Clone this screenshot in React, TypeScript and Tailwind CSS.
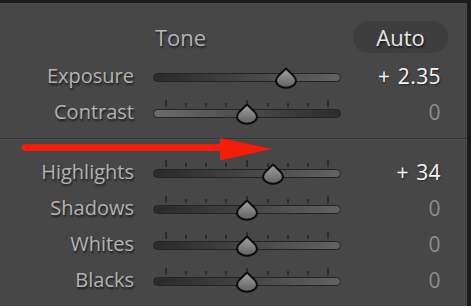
import React from "react";

const TICKS = [13, 33, 53, 73, 94, 115, 135, 155, 175];
const TALL = new Set([13, 94, 175]);

function Thumb({ x }: { x: number }) {
  return (
    <svg
      width="22"
      height="22"
      viewBox="0 0 22 22"
      className="absolute top-[9px]"
      style={{ left: x - 11 }}
    >
      <defs>
        <linearGradient id="thumbg" x1="0" y1="0" x2="0" y2="1">
          <stop offset="0" stopColor="#a4a4a4" />
          <stop offset="1" stopColor="#5f5f5f" />
        </linearGradient>
      </defs>
      <path
        d="M11 1.5 L18 8.3 Q21 11 21 13.5 A10 7.3 0 0 1 1 13.5 Q1 11 4 8.3 Z"
        fill="url(#thumbg)"
        stroke="#0c0c0c"
        strokeWidth="2"
        strokeLinejoin="round"
      />
    </svg>
  );
}

function Row({
  label,
  value,
  pos,
  ticks = true,
  reverse = false,
  bright = false,
}: {
  label: string;
  value: string;
  pos: number;
  ticks?: boolean;
  reverse?: boolean;
  bright?: boolean;
}) {
  return (
    <div className="flex h-[36px] items-center">
      <div className="w-[134px] text-right text-[20px] leading-none text-[#b3b3b3] [text-shadow:1px_2px_2px_rgba(0,0,0,0.6)]">
        {label}
      </div>
      <div className="relative ml-[19px] flex h-[36px] w-[188px] flex-col pt-[6px]">
        <svg width="188" height="7" className="block">
          {ticks &&
            TICKS.map((t) => (
              <rect
                key={t}
                x={t - 1}
                y={TALL.has(t) ? 0 : 3}
                width="2"
                height={TALL.has(t) ? 7 : 4}
                fill="#2c2c2c"
              />
            ))}
        </svg>
        <div
          className={
            "mt-[2px] h-[9px] w-full rounded-full border border-[#242424] bg-linear-to-r " +
            (reverse ? "from-[#6c6c6c] to-[#2c2c2c]" : "from-[#2a2a2a] to-[#626262]")
          }
        />
        <Thumb x={pos} />
      </div>
      <div
        className={
          "w-[100px] text-right text-[21px] leading-none tracking-[0.4px] [word-spacing:1.5px] " +
          (bright
            ? "text-[#f4f4f4] [text-shadow:1px_1px_2px_rgba(0,0,0,0.5)]"
            : "text-[#8d8d8d]")
        }
      >
        {value}
      </div>
    </div>
  );
}

export default function App() {
  return (
    <div
      className="relative h-[306px] w-[471px] overflow-hidden border-t-[3px] border-r-[4px] border-t-[#1b1b1b] border-r-[#1b1b1b] bg-[#474747]"
      style={{ fontFamily: '"Open Sans", "Noto Sans", sans-serif' }}
    >
      <div className="flex items-center pt-[18px] pb-[5px] pl-[155px] pr-[19px]">
        <div className="text-[22px] leading-none text-[#b3b3b3] [text-shadow:1px_2px_2px_rgba(0,0,0,0.6)]">
          Tone
        </div>
        <div className="ml-auto flex h-[32px] w-[95px] items-center justify-center rounded-full bg-[#3e3e3e] text-[22px] leading-none text-[#e6e6e6] [text-shadow:1px_2px_2px_rgba(0,0,0,0.6)]">
          Auto
        </div>
      </div>
      <Row label="Exposure" value="+ 2.35" pos={133} ticks={false} bright />
      <Row label="Contrast" value="0" pos={94} reverse />
      <div className="mt-[8px] mb-[14px] h-[2px] border-t border-t-[#353535] border-b border-b-[#4c4c4c]" />
      <Row label="Highlights" value="+ 34" pos={120} bright />
      <Row label="Shadows" value="0" pos={94} />
      <Row label="Whites" value="0" pos={94} />
      <Row label="Blacks" value="0" pos={94} />
      <svg
        width="471"
        height="306"
        className="pointer-events-none absolute left-0 top-[-3px]"
      >
        <line
          x1="25"
          y1="147.5"
          x2="224"
          y2="147.5"
          stroke="#f41d0a"
          strokeWidth="7"
          strokeLinecap="round"
        />
        <polygon points="220,138 272,149 220,160.5" fill="#f41d0a" />
      </svg>
    </div>
  );
}
